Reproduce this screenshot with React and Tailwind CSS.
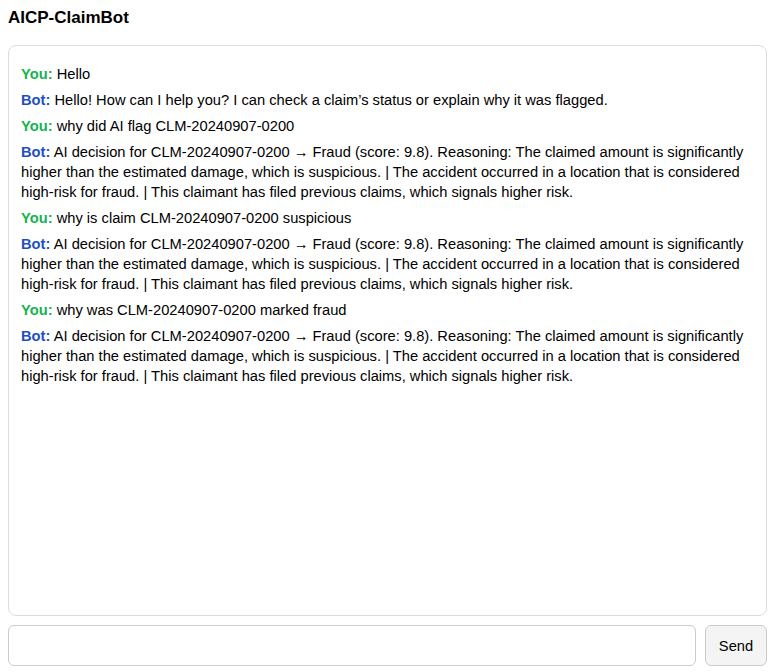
import React, { useState } from 'react';

const reason =
  'AI decision for CLM-20240907-0200 \u2192 Fraud (score: 9.8). Reasoning: The claimed amount is significantly higher than the estimated damage, which is suspicious. | The accident occurred in a location that is considered high-risk for fraud. | This claimant has filed previous claims, which signals higher risk.';

const initialMessages = [
  { from: 'You', text: 'Hello' },
  { from: 'Bot', text: 'Hello! How can I help you? I can check a claim\u2019s status or explain why it was flagged.' },
  { from: 'You', text: 'why did AI flag CLM-20240907-0200' },
  { from: 'Bot', text: reason },
  { from: 'You', text: 'why is claim CLM-20240907-0200 suspicious' },
  { from: 'Bot', text: reason },
  { from: 'You', text: 'why was CLM-20240907-0200 marked fraud' },
  { from: 'Bot', text: reason },
];

export default function App() {
  const [messages] = useState(initialMessages);
  const [draft, setDraft] = useState('');

  return (
    <div className="pt-2 pl-2 pr-[15px] text-[14.7px] leading-5 text-black bg-white" style={{ fontFamily: '"Liberation Sans", Arial, sans-serif' }}>
      <h1 className="text-[17px] font-bold leading-5 mb-[17px]">AICP-ClaimBot</h1>

      <div className="h-[571px] overflow-y-auto rounded-lg border border-[#dddddd] px-3 py-3">
        {messages.map((m, i) => (
          <div key={i} className="my-[6px]">
            <b className={m.from === 'You' ? 'text-[#17b352]' : 'text-[#1d4fbf]'}>{m.from}:</b> {m.text}
          </div>
        ))}
      </div>

      <div className="flex gap-[9px] mt-[9px]">
        <input
          type="text"
          value={draft}
          onChange={(e) => setDraft(e.target.value)}
          className="flex-1 h-[41px] rounded-md border border-[#cccccc] px-2 outline-none"
        />
        <button className="h-[41px] w-[62px] rounded-md border border-[#cccccc] bg-[#f4f4f4] text-[14.7px]">Send</button>
      </div>
    </div>
  );
}
